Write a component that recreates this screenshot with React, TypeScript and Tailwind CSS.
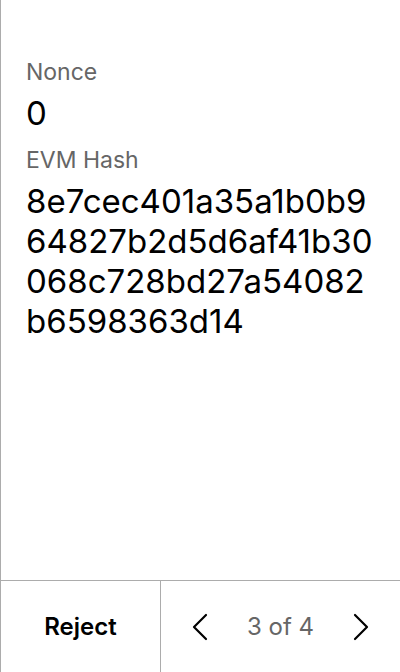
import React from "react";

export default function App() {
  return (
    <div
      className="flex h-[672px] w-[400px] flex-col border-l border-[#acacac] bg-white text-black"
      style={{ fontFamily: "Inter, 'Liberation Sans', sans-serif" }}
    >
      <div className="flex-1 pl-[25px] pt-[56px]">
        <div className="text-[23px] leading-[32px] text-[#666666]">Nonce</div>
        <div className="mt-[5px] text-[33px] leading-[40px]">0</div>
        <div className="mt-[11px] text-[23px] leading-[32px] text-[#666666]">EVM Hash</div>
        <div className="mt-[5px] text-[33px] leading-[40px] whitespace-nowrap">
          <div>8e7cec401a35a1b0b9</div>
          <div>64827b2d5d6af41b30</div>
          <div>068c728bd27a54082</div>
          <div>b6598363d14</div>
        </div>
      </div>
      <div className="flex h-[92px] border-t border-[#acacac]">
        <div className="flex w-[160px] items-center justify-center border-r border-[#acacac] text-[24px] font-semibold">
          Reject
        </div>
        <div className="flex flex-1 items-center justify-between px-[31px]">
          <svg width="16" height="28" viewBox="0 0 16 28" fill="none" stroke="black" strokeWidth="2.2" strokeLinecap="round" strokeLinejoin="round">
            <path d="M14 2 L2 14 L14 26" />
          </svg>
          <span className="text-[24px] text-[#666666]">3 of 4</span>
          <svg width="16" height="28" viewBox="0 0 16 28" fill="none" stroke="black" strokeWidth="2.2" strokeLinecap="round" strokeLinejoin="round">
            <path d="M2 2 L14 14 L2 26" />
          </svg>
        </div>
      </div>
    </div>
  );
}
